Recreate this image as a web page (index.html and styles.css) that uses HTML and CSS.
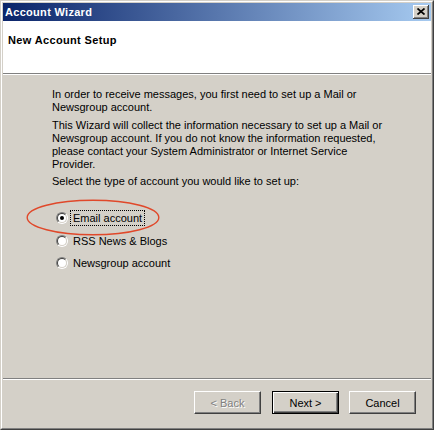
FILE: index.html
```html
<!DOCTYPE html>
<html>
<head>
<meta charset="utf-8">
<title>Account Wizard</title>
<link rel="stylesheet" href="styles.css">
</head>
<body>
<div class="window">
  <div class="frame">
    <div class="titlebar">
      <span class="title">Account Wizard</span>
      <button class="close" aria-label="Close">
        <svg width="8" height="7" viewBox="0 0 8 7"><path d="M0.5 0.5 L7.5 6.5 M7.5 0.5 L0.5 6.5" stroke="#000" stroke-width="1.7" fill="none"/></svg>
      </button>
    </div>
    <div class="header">
      <div class="heading">New Account Setup</div>
    </div>
    <div class="content">
      <p class="para">In order to receive messages, you first need to set up a Mail or<br>Newsgroup account.</p>
      <p class="para">This Wizard will collect the information necessary to set up a Mail or<br>Newsgroup account. If you do not know the information requested,<br>please contact your System Administrator or Internet Service<br>Provider.</p>
      <p class="para">Select the type of account you would like to set up:</p>
      <div class="options">
        <div class="option">
          <span class="radio checked"><span class="radio-inner"><span class="dot"></span></span></span>
          <span class="label focused">Email account</span>
        </div>
        <div class="option">
          <span class="radio"><span class="radio-inner"></span></span>
          <span class="label">RSS News &amp; Blogs</span>
        </div>
        <div class="option">
          <span class="radio"><span class="radio-inner"></span></span>
          <span class="label">Newsgroup account</span>
        </div>
      </div>
      <svg class="highlight" width="134" height="37" viewBox="0 0 134 37"><ellipse cx="67" cy="18.5" rx="65.8" ry="17.3" fill="none" stroke="#e0482a" stroke-width="1.4"/></svg>
    </div>
    <div class="footer">
      <button class="btn disabled">&lt; Back</button>
      <button class="btn default">Next &gt;</button>
      <button class="btn">Cancel</button>
    </div>
  </div>
</div>
</body>
</html>
```
FILE: styles.css
```css
* { box-sizing: border-box; }
html, body { margin: 0; padding: 0; }
body {
  background: #d4d0c8;
  font-family: "Liberation Sans", Arial, sans-serif;
  font-size: 11px;
  color: #000;
}
.window {
  width: 434px;
  height: 430px;
  border: 1px solid;
  border-color: #d4d0c8 #404040 #404040 #d4d0c8;
}
.frame {
  height: 100%;
  border: 1px solid;
  border-color: #fff #808080 #808080 #fff;
  padding: 1px;
  background: #d4d0c8;
  display: flex;
  flex-direction: column;
}
.titlebar {
  height: 18px;
  flex: none;
  background: linear-gradient(to right, #0a246a, #a6caf0);
  display: flex;
  align-items: center;
  justify-content: space-between;
  padding: 0 2px 0 2px;
}
.title {
  color: #fff;
  font-weight: bold;
  font-size: 11px;
  line-height: 13px;
  letter-spacing: 0.3px;
}
.close {
  width: 16px;
  height: 14px;
  padding: 0;
  margin: 0;
  border: none;
  background: #d4d0c8;
  box-shadow: inset -1px -1px #404040, inset 1px 1px #fff, inset -2px -2px #808080;
  display: flex;
  align-items: center;
  justify-content: center;
  padding-right: 1px;
  padding-bottom: 1px;
}
.close svg { display: block; }
.header {
  height: 54px;
  flex: none;
  background: #fff;
  border-bottom: 1px solid #fff;
  box-shadow: inset 0 -1px #808080;
  padding: 13px 0 0 5px;
}
.heading {
  font-weight: bold;
  line-height: 13px;
  letter-spacing: 0.35px;
}
.content {
  flex: 1;
  position: relative;
  padding: 13px 0 0 49px;
}
.para {
  margin: 0 0 5px 0;
  line-height: 13px;
  white-space: nowrap;
}
.para:nth-of-type(2) { margin-bottom: 4px; }
.options {
  margin: 19px 0 0 4px;
  display: flex;
  flex-direction: column;
}
.option {
  height: 22.5px;
  display: flex;
  align-items: center;
}
.radio {
  width: 12px;
  height: 12px;
  border-radius: 50%;
  border: 1px solid;
  border-color: #808080 #fff #fff #808080;
  flex: none;
}
.radio-inner {
  display: flex;
  align-items: center;
  justify-content: center;
  width: 10px;
  height: 10px;
  border-radius: 50%;
  border: 1px solid;
  border-color: #404040 #d4d0c8 #d4d0c8 #404040;
  background: #fff;
}
.dot {
  width: 4px;
  height: 4px;
  border-radius: 50%;
  background: #000;
}
.label {
  margin-left: 2px;
  padding: 0 2px;
  line-height: 14px;
  border: 1px solid transparent;
}
.label.focused {
  border: 1px dotted #000;
}
.highlight {
  position: absolute;
  left: 23px;
  top: 124px;
}
.footer {
  flex: none;
  height: 49px;
  border-top: 1px solid #808080;
  box-shadow: inset 0 1px #fff;
  padding: 12px 15px 0 0;
  display: flex;
  justify-content: flex-end;
  align-items: flex-start;
}
.btn {
  width: 67px;
  height: 23px;
  margin: 0;
  padding: 0;
  font-family: "Liberation Sans", Arial, sans-serif;
  font-size: 11px;
  color: #000;
  background: #d4d0c8;
  border: 1px solid;
  border-color: #fff #404040 #404040 #fff;
  box-shadow: inset -1px -1px #808080;
}
.btn.disabled {
  color: #808080;
  text-shadow: 1px 1px #fff;
  margin-right: 11px;
}
.btn.default {
  border: 1px solid #000;
  box-shadow: inset 1px 1px #fff, inset -1px -1px #404040, inset -2px -2px #808080;
  margin-right: 10px;
}
```
